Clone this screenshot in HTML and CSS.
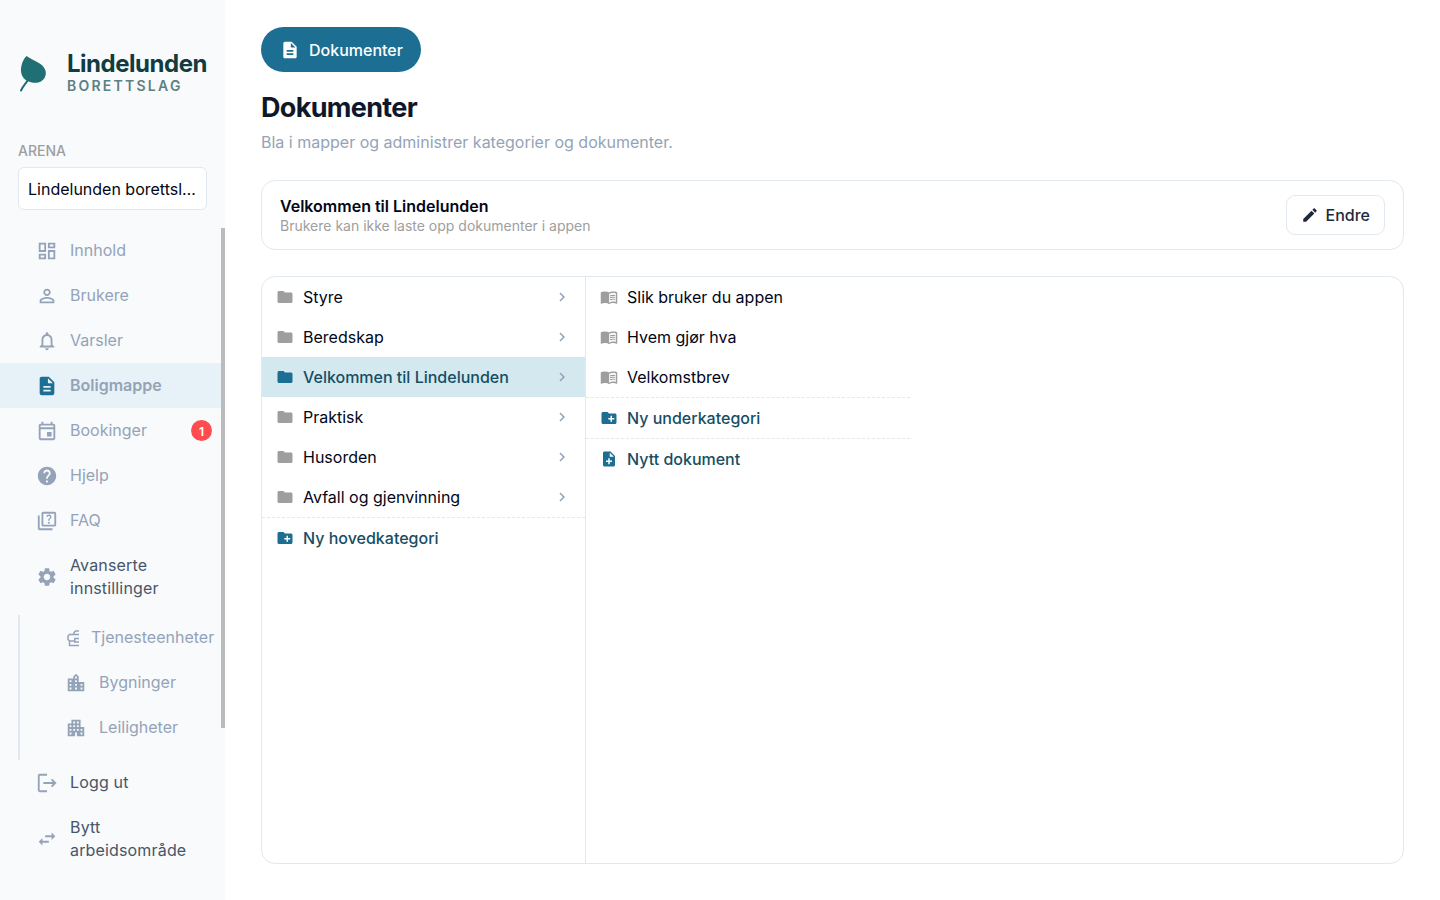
FILE: index.html
```html
<!DOCTYPE html>
<html lang="nb">
<head>
<meta charset="utf-8">
<meta name="viewport" content="width=device-width, initial-scale=1">
<title>Dokumenter</title>
<link rel="stylesheet" href="styles.css">
</head>
<body>
<svg class="sprite" aria-hidden="true">
  <symbol id="dashboard" viewBox="0 0 24 24"><path d="M19 5v2h-4V5h4M9 5v6H5V5h4m10 8v6h-4v-6h4M9 17v2H5v-2h4M21 3h-8v6h8V3zM11 3H3v10h8V3zm10 8h-8v10h8V11zm-10 4H3v6h8v-6z"/></symbol>
  <symbol id="person" viewBox="0 0 24 24"><path d="M12 5.900c1.160 0 2.100.94 2.100 2.100s-.94 2.100-2.100 2.100S9.900 9.160 9.900 8s.94-2.100 2.100-2.100m0 9c2.970 0 6.100 1.460 6.100 2.100v1.100H5.900V17c0-.640 3.130-2.100 6.100-2.100M12 4C9.790 4 8 5.790 8 8s1.790 4 4 4 4-1.790 4-4-1.790-4-4-4zm0 9c-2.670 0-8 1.340-8 4v3h16v-3c0-2.660-5.330-4-8-4z"/></symbol>
  <symbol id="bell" viewBox="0 0 24 24"><path d="M12 22c1.100 0 2-.9 2-2h-4c0 1.100.9 2 2 2zm6-6v-5c0-3.070-1.630-5.640-4.500-6.320V4c0-.83-.67-1.500-1.500-1.500s-1.500.67-1.500 1.500v.68C7.640 5.360 6 7.920 6 11v5l-2 2v1h16v-1l-2-2zm-2 1H8v-6c0-2.480 1.510-4.500 4-4.500s4 2.020 4 4.500v6z"/></symbol>
  <symbol id="doc" viewBox="0 0 24 24"><path d="M14 2H6c-1.100 0-1.990.9-1.990 2L4 20c0 1.100.89 2 1.990 2H18c1.100 0 2-.9 2-2V8l-6-6zm2 16H8v-2h8v2zm0-4H8v-2h8v2zm-3-5V3.500L18.500 9H13z"/></symbol>
  <symbol id="event" viewBox="0 0 24 24"><path d="M19 4h-1V2h-2v2H8V2H6v2H5c-1.110 0-1.990.9-1.990 2L3 20c0 1.100.89 2 2 2h14c1.100 0 2-.9 2-2V6c0-1.100-.9-2-2-2zm0 16H5V10h14v10zm0-12H5V6h14v2zm-7 5h5v5h-5z"/></symbol>
  <symbol id="help" viewBox="0 0 24 24"><path d="M12 2C6.480 2 2 6.480 2 12s4.480 10 10 10 10-4.480 10-10S17.520 2 12 2zm1 17h-2v-2h2v2zm2.070-7.750l-.9.920C13.450 12.900 13 13.500 13 15h-2v-.5c0-1.100.450-2.100 1.170-2.830l1.240-1.260c.370-.360.590-.860.590-1.410 0-1.100-.9-2-2-2s-2 .9-2 2H8c0-2.210 1.790-4 4-4s4 1.790 4 4c0 .88-.36 1.680-.93 2.250z"/></symbol>
  <symbol id="quiz" viewBox="0 0 24 24"><path d="M4 6H2v14c0 1.100.9 2 2 2h14v-2H4V6z"/><path d="M20 2H8c-1.100 0-2 .9-2 2v12c0 1.100.9 2 2 2h12c1.100 0 2-.9 2-2V4c0-1.100-.9-2-2-2zm0 14H8V4h12v12z"/><path d="M13.510 10.160c.410-.730 1.180-1.160 1.630-1.800.480-.680.210-1.940-1.140-1.940-.880 0-1.320.670-1.500 1.230l-1.370-.570C11.510 5.960 12.520 5 13.990 5c1.230 0 2.080.560 2.510 1.260.370.6.580 1.730.010 2.570-.630.930-1.230 1.210-1.560 1.810-.130.240-.180.4-.180 1.180h-1.520c.010-.410-.060-1.080.260-1.660zM12.950 13.950c0-.590.470-1.040 1.050-1.040.590 0 1.040.450 1.040 1.040 0 .580-.440 1.050-1.040 1.050-.580 0-1.050-.470-1.050-1.050z"/></symbol>
  <symbol id="gear" viewBox="0 0 24 24"><path d="M19.140 12.940c.040-.3.060-.610.060-.940 0-.320-.020-.640-.070-.940l2.030-1.580c.180-.140.230-.410.120-.610l-1.920-3.320c-.120-.220-.370-.290-.590-.220l-2.390.960c-.5-.380-1.030-.7-1.620-.940l-.360-2.540c-.040-.240-.240-.410-.480-.410h-3.840c-.240 0-.430.170-.470.410l-.360 2.540c-.590.240-1.130.570-1.620.940l-2.390-.960c-.220-.080-.470 0-.590.220L2.740 8.870c-.120.210-.080.470.120.610l2.030 1.580c-.050.3-.090.630-.090.940s.020.640.070.940l-2.030 1.580c-.180.140-.230.410-.120.610l1.920 3.320c.120.220.370.290.590.220l2.390-.960c.5.380 1.030.7 1.620.940l.360 2.540c.050.240.240.410.480.410h3.840c.240 0 .440-.170.470-.410l.360-2.540c.590-.240 1.130-.560 1.620-.940l2.390.960c.220.080.470 0 .590-.220l1.920-3.320c.120-.220.070-.470-.120-.610l-2.010-1.580zM12 15.600c-1.980 0-3.600-1.620-3.600-3.600s1.620-3.600 3.600-3.600 3.600 1.620 3.600 3.600-1.620 3.600-3.600 3.600z"/></symbol>
  <symbol id="unit" viewBox="0 0 14 22"><path fill="none" stroke="currentColor" stroke-width="1.500" d="M14 4H10.500L9 5.500V7.500M14 7.500H4.500L3 9V12.500L4.500 14H9.500M4.500 14V18.500H14M14 11.500H9.800V15H14"/></symbol>
  <symbol id="city" viewBox="0 0 24 24"><path d="M15 11V5l-3-3-3 3v2H3v14h18V11h-6zm-8 8H5v-2h2v2zm0-4H5v-2h2v2zm0-4H5V9h2v2zm6 8h-2v-2h2v2zm0-4h-2v-2h2v2zm0-4h-2V9h2v2zm0-4h-2V5h2v2zm6 12h-2v-2h2v2zm0-4h-2v-2h2v2z"/></symbol>
  <symbol id="apartment" viewBox="0 0 24 24"><path d="M17 11V3H7v4H3v14h8v-4h2v4h8V11h-4zM7 19H5v-2h2v2zm0-4H5v-2h2v2zm0-4H5V9h2v2zm4 4H9v-2h2v2zm0-4H9V9h2v2zm0-4H9V5h2v2zm4 8h-2v-2h2v2zm0-4h-2V9h2v2zm0-4h-2V5h2v2zm4 12h-2v-2h2v2zm0-4h-2v-2h2v2z"/></symbol>
  <symbol id="logout" viewBox="0 0 24 24"><path fill="none" stroke="currentColor" stroke-width="2" d="M12 3H4Q3 3 3 4V20Q3 21 4 21H12M8 12H21M17 8L21 12L17 16"/></symbol>
  <symbol id="swap" viewBox="0 0 24 24"><path d="M6.990 11L3 15l3.990 4v-3H14v-2H6.990v-3zM21 9l-3.990-4v3H10v2h7.010v3L21 9z"/></symbol>
  <symbol id="folder" viewBox="0 0 24 24"><path d="M10 4H4c-1.100 0-1.990.9-1.990 2L2 18c0 1.100.9 2 2 2h16c1.100 0 2-.9 2-2V8c0-1.100-.9-2-2-2h-8l-2-2z"/></symbol>
  <symbol id="folder-add" viewBox="0 0 24 24"><path d="M20 6h-8l-2-2H4c-1.110 0-1.990.89-1.990 2L2 18c0 1.110.89 2 2 2h16c1.110 0 2-.89 2-2V8c0-1.110-.89-2-2-2zm-1 8h-3v3h-2v-3h-3v-2h3V9h2v3h3v2z"/></symbol>
  <symbol id="doc-add" viewBox="0 0 24 24"><path d="M14 2H6c-1.100 0-1.990.9-1.990 2L4 20c0 1.100.89 2 1.990 2H18c1.100 0 2-.9 2-2V8l-6-6zm2 14h-3v3h-2v-3H8v-2h3v-3h2v3h3v2zm-3-7V3.500L18.500 9H13z"/></symbol>
  <symbol id="book" viewBox="0 0 24 24"><path d="M21 5c-1.110-.35-2.330-.5-3.500-.5-1.950 0-4.050.4-5.500 1.500-1.450-1.100-3.550-1.500-5.500-1.500S2.450 4.900 1 6v14.650c0 .25.25.5.5.5.1 0 .15-.05.25-.05C3.100 20.450 5.050 20 6.500 20c1.950 0 4.050.4 5.500 1.500 1.350-.85 3.800-1.500 5.500-1.500 1.650 0 3.350.3 4.750 1.050.1.050.15.050.25.050.25 0 .5-.25.5-.5V6c-.6-.45-1.250-.75-2-1zm0 13.500c-1.100-.35-2.300-.5-3.500-.5-1.700 0-4.150.65-5.500 1.500V8c1.350-.85 3.800-1.500 5.500-1.500 1.200 0 2.400.15 3.500.5v11.500z"/><path d="M17.500 10.500c.88 0 1.730.09 2.500.26V9.240c-.79-.15-1.640-.24-2.500-.24-1.700 0-3.240.29-4.500.83v1.660c1.130-.64 2.700-.99 4.500-.99zM13 12.490v1.660c1.130-.64 2.700-.99 4.500-.99.88 0 1.730.09 2.500.26V11.900c-.79-.15-1.640-.24-2.500-.24-1.700 0-3.240.3-4.500.83zM17.500 14.330c-1.700 0-3.240.29-4.500.83v1.660c1.130-.64 2.700-.99 4.500-.99.88 0 1.730.09 2.500.26v-1.520c-.79-.16-1.640-.24-2.500-.24z"/></symbol>
  <symbol id="chevron" viewBox="0 0 24 24"><path d="M10 6L8.590 7.410 13.170 12l-4.580 4.590L10 18l6-6z"/></symbol>
  <symbol id="pencil" viewBox="0 0 24 24"><path d="M3 17.250V21h3.750L17.810 9.940l-3.750-3.750L3 17.250zM20.710 7.040c.39-.39.39-1.020 0-1.410l-2.340-2.340c-.39-.39-1.020-.39-1.410 0l-1.830 1.830 3.750 3.750 1.830-1.830z"/></symbol>
</svg>
<div class="app">
  <aside class="sidebar">
    <div class="brand">
      <svg class="brand-mark" viewBox="0 0 28 38" aria-hidden="true"><path fill="#1f6f74" d="M7.500 1C11 4 17.500 6 21.500 9C26.500 13 28 17.500 26 22C23 28.500 15 29.500 7.500 25.500C2.500 22.500 1 16.500 2.500 10.500C3.500 6.500 5.300 3 7.500 1Z"/><path fill="none" stroke="#1f6f74" stroke-width="2" stroke-linecap="round" d="M9.500 24C7 28.500 4 31 2 35.500"/></svg>
      <div class="brand-text"><span class="brand-name">Lindelunden</span><span class="brand-kind">BORETTSLAG</span></div>
    </div>
    <div class="arena">
      <label for="arena">ARENA</label>
      <select id="arena"><option>Lindelunden borettslag</option></select>
    </div>
    <nav class="nav">
      <a href="#" class="nav-item"><svg class="icon"><use href="#dashboard"/></svg><span>Innhold</span></a>
      <a href="#" class="nav-item"><svg class="icon"><use href="#person"/></svg><span>Brukere</span></a>
      <a href="#" class="nav-item"><svg class="icon"><use href="#bell"/></svg><span>Varsler</span></a>
      <a href="#" class="nav-item active" aria-current="page"><svg class="icon"><use href="#doc"/></svg><span>Boligmappe</span></a>
      <a href="#" class="nav-item"><svg class="icon"><use href="#event"/></svg><span>Bookinger</span><span class="badge">1</span></a>
      <a href="#" class="nav-item"><svg class="icon"><use href="#help"/></svg><span>Hjelp</span></a>
      <a href="#" class="nav-item"><svg class="icon"><use href="#quiz"/></svg><span>FAQ</span></a>
      <button type="button" class="nav-item strong"><svg class="icon"><use href="#gear"/></svg><span>Avanserte innstillinger</span></button>
      <div class="subnav">
        <a href="#" class="nav-item"><svg class="icon icon-narrow"><use href="#unit"/></svg><span>Tjenesteenheter</span></a>
        <a href="#" class="nav-item"><svg class="icon"><use href="#city"/></svg><span>Bygninger</span></a>
        <a href="#" class="nav-item"><svg class="icon"><use href="#apartment"/></svg><span>Leiligheter</span></a>
      </div>
      <button type="button" class="nav-item strong"><svg class="icon"><use href="#logout"/></svg><span>Logg ut</span></button>
      <button type="button" class="nav-item strong"><svg class="icon"><use href="#swap"/></svg><span>Bytt arbeidsområde</span></button>
      <div class="scroll-thumb"></div>
    </nav>
  </aside>
  <main class="main">
    <button type="button" class="tab"><svg class="icon-m"><use href="#doc"/></svg>Dokumenter</button>
    <h1>Dokumenter</h1>
    <p class="lead">Bla i mapper og administrer kategorier og dokumenter.</p>
    <section class="card">
      <div>
        <h2>Velkommen til Lindelunden</h2>
        <p class="note">Brukere kan ikke laste opp dokumenter i appen</p>
      </div>
      <button type="button" class="edit"><svg class="icon-s"><use href="#pencil"/></svg>Endre</button>
    </section>
    <section class="browser">
      <div class="column">
        <button type="button" class="row"><svg class="icon-s"><use href="#folder"/></svg><span>Styre</span><svg class="chevron"><use href="#chevron"/></svg></button>
        <button type="button" class="row"><svg class="icon-s"><use href="#folder"/></svg><span>Beredskap</span><svg class="chevron"><use href="#chevron"/></svg></button>
        <button type="button" class="row selected"><svg class="icon-s"><use href="#folder"/></svg><span>Velkommen til Lindelunden</span><svg class="chevron"><use href="#chevron"/></svg></button>
        <button type="button" class="row"><svg class="icon-s"><use href="#folder"/></svg><span>Praktisk</span><svg class="chevron"><use href="#chevron"/></svg></button>
        <button type="button" class="row"><svg class="icon-s"><use href="#folder"/></svg><span>Husorden</span><svg class="chevron"><use href="#chevron"/></svg></button>
        <button type="button" class="row"><svg class="icon-s"><use href="#folder"/></svg><span>Avfall og gjenvinning</span><svg class="chevron"><use href="#chevron"/></svg></button>
        <button type="button" class="row add"><svg class="icon-s"><use href="#folder-add"/></svg><span>Ny hovedkategori</span></button>
      </div>
      <div class="column">
        <button type="button" class="row"><svg class="icon-s"><use href="#book"/></svg><span>Slik bruker du appen</span></button>
        <button type="button" class="row"><svg class="icon-s"><use href="#book"/></svg><span>Hvem gjør hva</span></button>
        <button type="button" class="row"><svg class="icon-s"><use href="#book"/></svg><span>Velkomstbrev</span></button>
        <button type="button" class="row add"><svg class="icon-s"><use href="#folder-add"/></svg><span>Ny underkategori</span></button>
        <button type="button" class="row add"><svg class="icon-s"><use href="#doc-add"/></svg><span>Nytt dokument</span></button>
      </div>
    </section>
  </main>
</div>
</body>
</html>
```
FILE: styles.css
```css
* { box-sizing: border-box; }
body { margin: 0; font-family: Inter, "Liberation Sans", sans-serif; font-size: 16px; line-height: 24px; color: #020617; background: #fff; }
button, select { font: inherit; color: inherit; margin: 0; cursor: pointer; }
h1, h2, p { margin: 0; }
svg { fill: currentColor; flex: none; }
.sprite { position: absolute; width: 0; height: 0; }
.app { display: flex; min-height: 100vh; }

.sidebar { width: 225px; flex: none; display: flex; flex-direction: column; background: #f8fafc; }
.brand { display: flex; align-items: center; gap: 20px; padding: 50px 0 0 19px; }
.brand-mark { width: 28px; height: 38px; margin-top: 3px; }
.brand-text { display: flex; flex-direction: column; }
.brand-name { font-size: 24px; line-height: 28px; font-weight: 700; letter-spacing: -0.02em; color: #123c3f; }
.brand-kind { font-size: 14px; line-height: 16px; font-weight: 600; letter-spacing: 0.16em; color: #5d8083; }
.arena { display: flex; flex-direction: column; gap: 6px; padding: 47px 18px 18px; }
.arena label { font-size: 14px; line-height: 20px; font-weight: 500; color: #9e9e9e; }
.arena select { appearance: none; width: 100%; height: 43px; padding: 0 9px; background: #fff; border: 1px solid #e2e8f0; border-radius: 6px; text-overflow: ellipsis; overflow: hidden; white-space: nowrap; }

.nav { position: relative; display: flex; flex-direction: column; color: #94a3b8; }
.nav-item { display: flex; align-items: center; gap: 12px; width: 100%; min-height: 45px; padding: 0 13px 0 36px; border: 0; background: none; color: inherit; text-align: left; text-decoration: none; line-height: 23px; }
.icon { width: 22px; height: 22px; }
.icon-narrow { width: 14px; }
.nav-item.active { background: #e6f2f7; font-weight: 600; }
.nav-item.active .icon { color: #1c6f92; }
.nav-item.strong { padding-top: 11px; padding-bottom: 11px; letter-spacing: 0.01em; }
.nav-item.strong span { color: #475569; }
.badge { display: grid; place-items: center; width: 21px; height: 21px; margin-left: auto; border-radius: 50%; background: #ff4d4f; color: #fff; font-size: 12px; font-weight: 600; }
.subnav { margin: 4px 0 0 18px; padding-bottom: 10px; border-left: 2px solid #e2e8f0; }
.subnav .nav-item { padding-left: 45px; }
.scroll-thumb { position: absolute; top: 0; right: 0; width: 4px; height: 500px; background: #b9bbbc; }

.main { flex: 1; min-width: 0; display: flex; flex-direction: column; padding: 27px 36px 36px; }
.tab { display: flex; align-items: center; align-self: flex-start; gap: 9px; height: 45px; padding: 0 18px 0 19px; border: 0; border-radius: 23px; background: #1c6f92; color: #fff; font-weight: 500; }
.icon-m { width: 20px; height: 20px; }
h1 { margin-top: 18px; font-size: 27px; line-height: 36px; font-weight: 700; letter-spacing: -0.025em; color: #0f172a; }
.lead { margin-top: 4px; color: #94a3b8; }
.card { display: flex; align-items: center; justify-content: space-between; gap: 16px; margin-top: 26px; padding: 14px 18px; border: 1px solid #e2e8f0; border-radius: 14px; }
h2 { font-size: 16px; line-height: 22px; font-weight: 600; }
.note { font-size: 14px; line-height: 18px; color: #9e9e9e; }
.edit { display: flex; align-items: center; gap: 7px; height: 40px; padding: 0 14px; border: 1px solid #e2e8f0; border-radius: 9px; background: #fff; color: #1e293b; font-weight: 500; }
.browser { flex: 1; display: flex; margin-top: 26px; border: 1px solid #e2e8f0; border-radius: 14px; overflow: hidden; }
.column { flex: 0 1 324px; }
.column:first-child { border-right: 1px solid #e2e8f0; }
.row { display: flex; align-items: center; gap: 9px; width: 100%; padding: 8px 14px; border: 0; background: none; text-align: left; }
.icon-s { width: 18px; height: 18px; }
.row .icon-s { color: #9e9e9e; }
.chevron { width: 18px; height: 18px; margin-left: auto; color: #94a3b8; }
.row.selected { background: #d3e8ef; color: #164e63; font-weight: 500; }
.row.add { border-top: 1px dashed #e2e8f0; color: #164e63; font-weight: 500; }
.row.selected .icon-s, .row.add .icon-s { color: #1c6f92; }
```
